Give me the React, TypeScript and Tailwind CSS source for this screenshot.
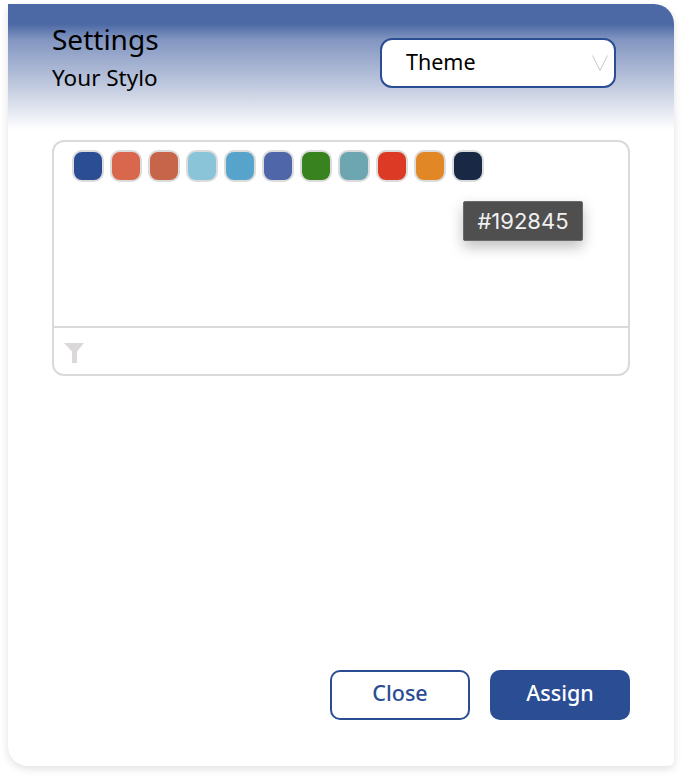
const swatches = ['#2a4d94', '#d9674e', '#c6654a', '#8ac4d8', '#56a4cb', '#4f67a8', '#38821f', '#6da5b0', '#dd3a26', '#e28726', '#192845'];

export default function App() {
  return (
    <div className="min-h-[776px] bg-white pl-2 pt-1 font-['Noto_Sans',sans-serif]">
      <div className="flex h-[762px] w-[666px] flex-col rounded-tr-[20px] rounded-bl-[20px] rounded-br-[6px] bg-white shadow-[0_3px_8px_rgba(0,0,0,0.12)]">
        {/* Header */}
        <div className="flex h-[126px] items-start justify-between rounded-tr-[20px] bg-[linear-gradient(to_bottom,#4c69a5_0px,#4c69a5_20px,#8396c1_36px,#c3cce0_84px,#ffffff_126px)] pl-[44px] pr-[58px]">
          <div className="flex flex-col pt-[16px]">
            <h1 className="text-[28px] leading-[38px] text-black">Settings</h1>
            <p className="mt-[5px] text-[22.500px] leading-[30px] text-black">Your Stylo</p>
          </div>
          <div className="mt-[34px] flex h-[50px] w-[236px] items-center justify-between rounded-xl border-2 border-[#2a4d94] bg-white pl-[24px] pr-[6px]">
            <span className="pb-[2px] text-[21.500px] text-black">Theme</span>
            <svg width="16" height="16" viewBox="0 0 16 16" fill="none" stroke="#c8c8c8" strokeWidth="1">
              <path d="M0.500 0.500l7.500 15 7.500-15" />
            </svg>
          </div>
        </div>

        {/* Body */}
        <div className="flex flex-1 flex-col justify-between px-[44px] pb-[46px] pt-[10px]">
          <div className="relative flex h-[236px] w-[578px] flex-col rounded-xl border-2 border-[#dcd9da]">
            <div className="flex flex-1 items-start gap-[6px] pl-[18px] pt-[8px]">
              {swatches.map(color => (
                <div
                  key={color}
                  className="h-[32px] w-[32px] rounded-[10px] border-2 border-[#dcdcdc]"
                  style={{ backgroundColor: color }}
                />
              ))}
            </div>
            <div className="flex h-[48px] items-center border-t-2 border-[#dcd9da] pl-[10px] pt-[4px]">
              <svg width="20" height="20" viewBox="0 0 20 20" fill="#dcd8d9">
                <path d="M0 0h20l-7 8.500v11.500h-5v-11.500z" />
              </svg>
            </div>
            {/* Tooltip */}
            <div className="absolute left-[409px] top-[59px] flex h-[40px] w-[120px] items-center justify-center rounded-[2px] border border-[#6b6b6b] bg-[#4f4f4f] font-['Inter',sans-serif] text-[22px] text-[#f0f0f0] shadow-[0_6px_14px_rgba(0,0,0,0.25)]">
              #192845
            </div>
          </div>

          {/* Footer */}
          <div className="flex justify-end gap-5">
            <button className="h-[50px] w-[140px] rounded-[10px] border-2 border-[#2a4d94] bg-white pb-[3px] text-[21.500px] font-medium text-[#2a4d94]">
              Close
            </button>
            <button className="h-[50px] w-[140px] rounded-[10px] bg-[#2a4d94] pb-[3px] text-[21.500px] font-medium text-white">
              Assign
            </button>
          </div>
        </div>
      </div>
    </div>
  );
}
